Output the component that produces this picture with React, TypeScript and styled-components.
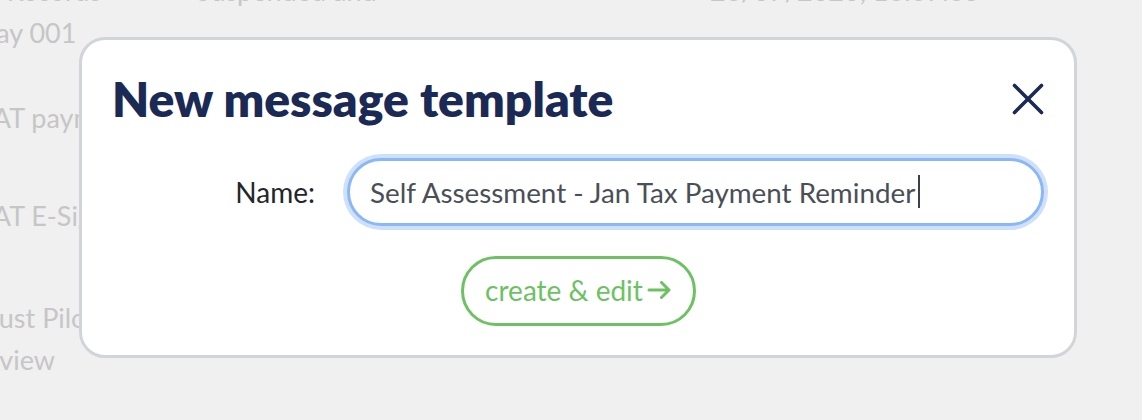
import React, { useEffect, useRef, useState } from "react";
import styled, { createGlobalStyle } from "styled-components";

const GlobalStyle = createGlobalStyle`
  html, body {
    margin: 0;
    padding: 0;
    background: #f0f0f0;
    font-family: Lato, "Open Sans", Arial, sans-serif;
    overflow: hidden;
  }
  * { box-sizing: border-box; }
`;

const FONT = `Lato, "Open Sans", Arial, sans-serif`;

const Page = styled.div`
  position: relative;
  width: 1142px;
  height: 420px;
  overflow: hidden;
`;

const Table = styled.div`
  display: flex;
  flex-direction: column;
  margin-top: -30px;
  margin-left: -24px;
`;

const Row = styled.div<{ $h: number }>`
  display: grid;
  grid-template-columns: 220px 514px 1fr;
  align-items: start;
  height: ${(p) => p.$h}px;
`;

const Cell = styled.div`
  font-size: 27px;
  line-height: 42px;
  color: #c6c6c6;
  white-space: pre-line;
`;

const Overlay = styled.div`
  position: absolute;
  inset: 0;
  display: flex;
  align-items: flex-start;
  padding: 37px 0 0 79px;
`;

const Modal = styled.div`
  width: 998px;
  background: #ffffff;
  border: 3px solid #d1d5da;
  border-radius: 26px;
  padding: 31px 30px 29px 30px;
  display: flex;
  flex-direction: column;
`;

const Header = styled.div`
  display: flex;
  align-items: center;
  justify-content: space-between;
`;

const Title = styled.h1`
  margin: 0;
  font-size: 48px;
  line-height: 56px;
  font-weight: 800;
  color: #1b2955;
`;

const CloseButton = styled.button`
  border: none;
  background: none;
  padding: 0;
  width: 32px;
  height: 32px;
  display: flex;
  cursor: pointer;
  margin-top: -1px;
`;

const FormRow = styled.div`
  margin-top: 31px;
  display: flex;
  align-items: center;
  justify-content: flex-end;
  gap: 32px;
`;

const Label = styled.label`
  font-size: 28px;
  color: #23262b;
`;

const Field = styled.div`
  position: relative;
  width: 697px;
  height: 68px;
`;

const NameInput = styled.input`
  width: 100%;
  height: 100%;
  border: 3px solid #8ab8f6;
  border-radius: 34px;
  box-shadow: 0 0 0 4px #cfe0fc;
  padding: 0 20px;
  font-family: ${FONT};
  font-size: 27.8px;
  color: #4a4f57;
  caret-color: transparent;
  outline: none;
  background: #fff;
`;

const Caret = styled.span`
  position: absolute;
  top: 17px;
  width: 2px;
  height: 33px;
  background: #3c4048;
  pointer-events: none;
`;

const Actions = styled.div`
  margin-top: 30px;
  display: flex;
  justify-content: center;
`;

const CreateButton = styled.button`
  height: 70px;
  width: 235px;
  border: 3px solid #6cc263;
  border-radius: 35px;
  background: #fff;
  color: #6cc263;
  font-family: ${FONT};
  font-size: 28px;
  display: flex;
  align-items: center;
  justify-content: center;
  gap: 4px;
  cursor: pointer;
  padding: 0 0 2px;
`;

const rows = [
  { h: 127, c: ["Yr Records\nDay 001", "Suspended and", "23/07/2020, 16:37:35"] },
  { h: 98, c: ["VAT payment", "Reminder", "23/07/2020, 16:37:35"] },
  { h: 102, c: ["VAT E-Signature", "Reminder", "23/07/2020, 16:37:35"] },
  { h: 148, c: ["Trust Pilot\nreview", "Request", "23/07/2020, 16:37:35"] },
];

export default function App() {
  const [value, setValue] = useState("Self Assessment - Jan Tax Payment Reminder");
  const [caretX, setCaretX] = useState<number | null>(null);
  const ref = useRef<HTMLInputElement>(null);

  useEffect(() => {
    const el = ref.current;
    if (el) {
      el.focus();
      el.setSelectionRange(el.value.length, el.value.length);
    }
  }, []);

  useEffect(() => {
    const measure = () => {
      const c = document.createElement("canvas").getContext("2d");
      if (!c) return;
      c.font = `27.8px ${FONT}`;
      setCaretX(23 + c.measureText(value).width);
    };
    measure();
    if ((document as any).fonts?.ready) (document as any).fonts.ready.then(measure);
  }, [value]);

  return (
    <Page>
      <GlobalStyle />
      <Table>
        {rows.map((r, i) => (
          <Row key={i} $h={r.h}>
            {r.c.map((t, j) => (
              <Cell key={j}>{t}</Cell>
            ))}
          </Row>
        ))}
      </Table>
      <Overlay>
        <Modal>
          <Header>
            <Title>New message template</Title>
            <CloseButton aria-label="Close">
              <svg width="32" height="32" viewBox="0 0 32 32" fill="none">
                <path d="M2.5 2.5 L29.5 29.5 M29.5 2.5 L2.5 29.5" stroke="#1b2955" strokeWidth="3.6" strokeLinecap="round" />
              </svg>
            </CloseButton>
          </Header>
          <FormRow>
            <Label htmlFor="tpl-name">Name:</Label>
            <Field>
              <NameInput id="tpl-name" ref={ref} value={value} onChange={(e) => setValue(e.target.value)} />
              {caretX !== null && <Caret style={{ left: caretX }} />}
            </Field>
          </FormRow>
          <Actions>
            <CreateButton>
              create &amp; edit
              <svg width="24" height="18" viewBox="0 0 24 18" fill="none">
                <path d="M2 9 H22 M14.5 1.5 L22 9 L14.5 16.5" stroke="#6cc263" strokeWidth="3" strokeLinecap="round" strokeLinejoin="round" />
              </svg>
            </CreateButton>
          </Actions>
        </Modal>
      </Overlay>
    </Page>
  );
}
